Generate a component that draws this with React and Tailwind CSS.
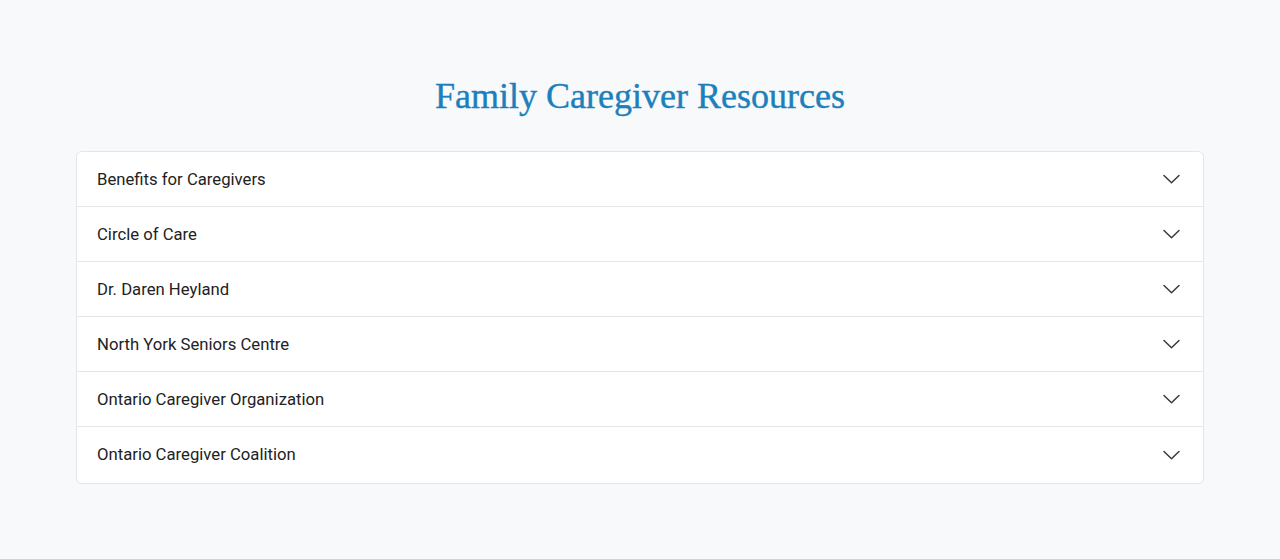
import React from "react";

const items = [
  "Benefits for Caregivers",
  "Circle of Care",
  "Dr. Daren Heyland",
  "North York Seniors Centre",
  "Ontario Caregiver Organization",
  "Ontario Caregiver Coalition",
];

function Chevron() {
  return (
    <svg width="19" height="11" viewBox="0 0 19 11" fill="none" className="shrink-0">
      <path d="M2 1.5L9.5 8.8L17 1.5" stroke="#3a3a3a" strokeWidth="1.5" strokeLinecap="round" strokeLinejoin="round" />
    </svg>
  );
}

export default function App() {
  return (
    <div className="min-h-[559px] w-full bg-[#f8f9fb] pt-[74px]" style={{ fontFamily: "Roboto, 'Liberation Sans', sans-serif" }}>
      <h1
        className="text-center text-[36px] leading-[44px] text-[#1b80bb]"
        style={{ fontFamily: "'Liberation Serif', 'DejaVu Serif', serif", WebkitTextStroke: "0.4px #1b80bb" }}
      >
        Family Caregiver Resources
      </h1>
      <div className="mx-[76px] mt-[33px] overflow-hidden rounded-md border border-[#e3e5e8] bg-white">
        {items.map((label, i) => (
          <div
            key={label}
            className={`flex h-[55.1px] items-center justify-between pl-[20px] pr-[22px] ${i < items.length - 1 ? "border-b border-[#e3e5e8]" : ""}`}
          >
            <span className="text-[16.7px] text-[#222222]">{label}</span>
            <Chevron />
          </div>
        ))}
      </div>
    </div>
  );
}
